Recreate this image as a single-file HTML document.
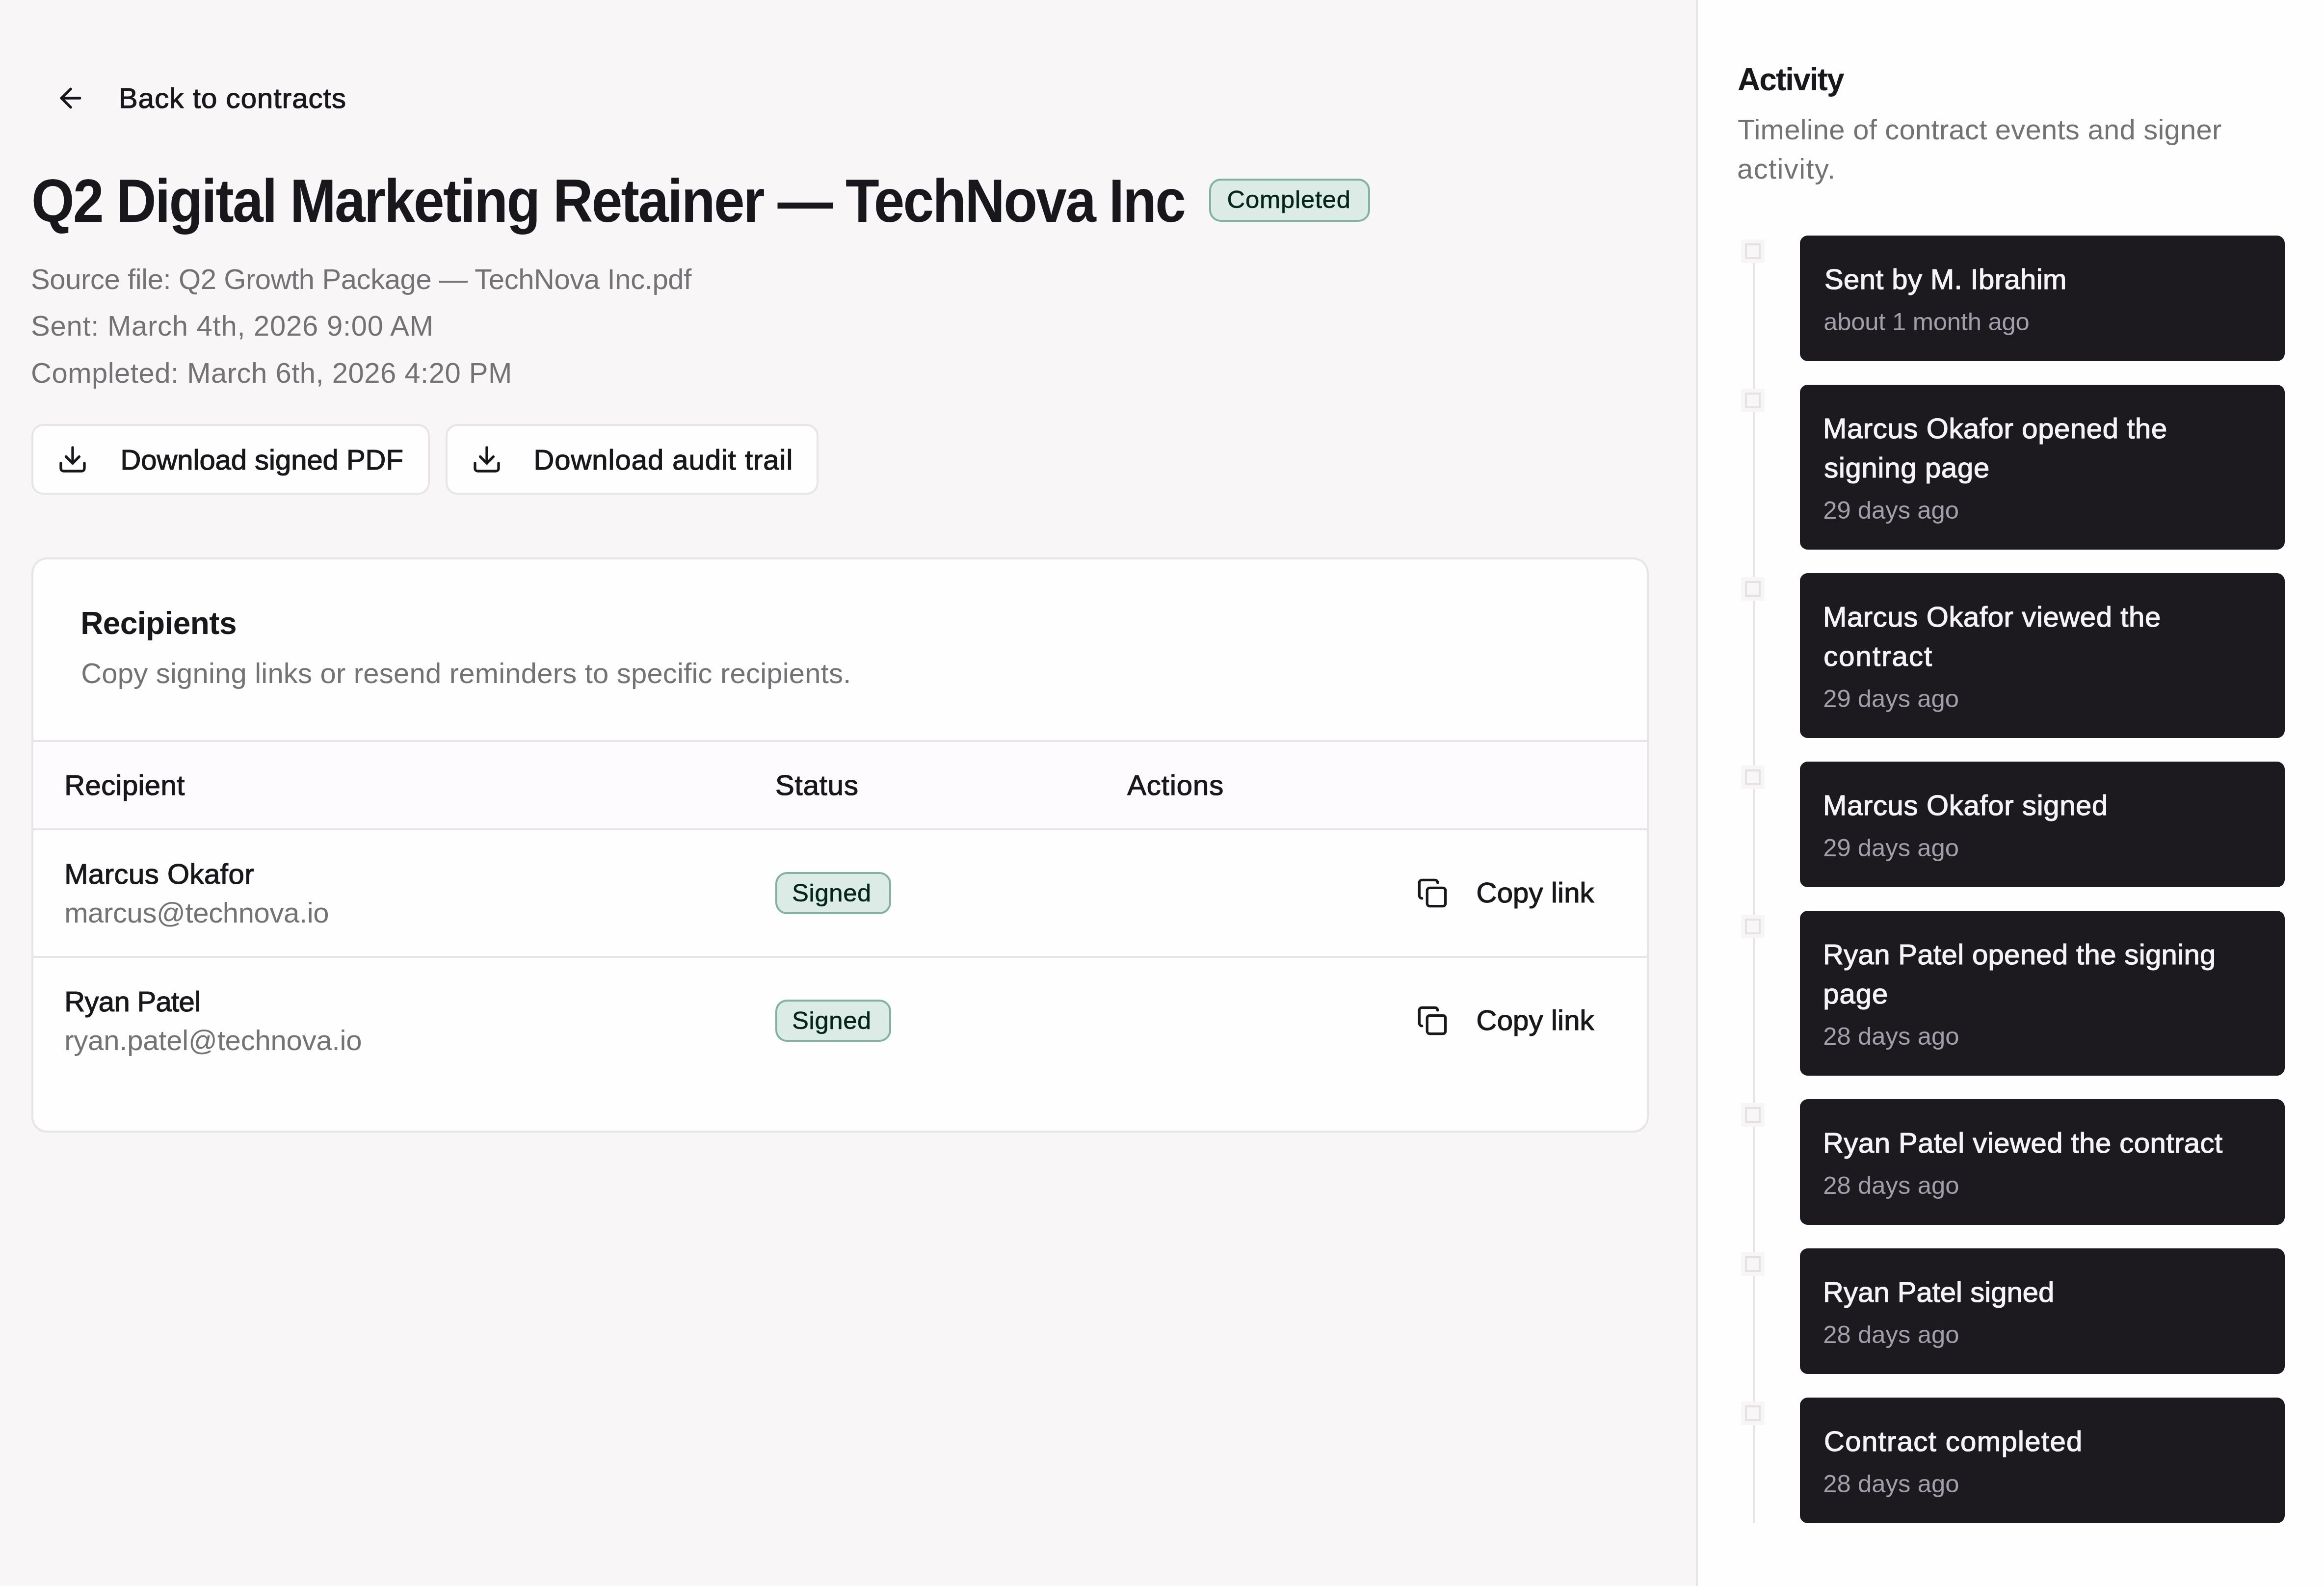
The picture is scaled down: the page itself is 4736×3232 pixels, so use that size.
<!DOCTYPE html><html><head><meta charset="utf-8"><style>
html,body{margin:0;padding:0;}
html{zoom:1;background:#f8f6f7;}
@media (min-width:2368px){html{zoom:2;}}
@media (min-width:3552px){html{zoom:3;}}
@media (min-width:4736px){html{zoom:4;}}
body{width:1184px;height:808px;overflow:hidden;position:relative;background:#f8f6f7;font-family:"Liberation Sans",sans-serif;color:#18171b;}
.a{position:absolute;white-space:nowrap;}
.t14{font-size:14.5px;line-height:20px;}
.t12{font-size:12.7px;line-height:16px;}
.t16{font-size:16px;line-height:24px;font-weight:700;}
.muted{color:#757276;}
.med{-webkit-text-stroke:0.3px currentColor;}
svg.ic{position:absolute;width:16px;height:16px;fill:none;stroke:currentColor;stroke-width:2;stroke-linecap:round;stroke-linejoin:round;}
#aside{position:absolute;left:864px;top:0;width:320px;height:808px;background:#fefefe;border-left:1px solid #e7e5e5;box-sizing:border-box;}
.btn{position:absolute;top:216px;height:36px;box-sizing:border-box;border:1px solid #e7e5e5;border-radius:6px;background:#fefefe;}
.badge .med{-webkit-text-stroke:0.15px currentColor;}
.badge{position:absolute;box-sizing:border-box;border:1px solid #80b3a3;background:#dcebe6;border-radius:6px;color:#03261b;}
#card{position:absolute;left:16px;top:284px;width:824px;height:293px;box-sizing:border-box;border:1px solid #e7e5e5;border-radius:8px;background:#fefefe;overflow:hidden;}
.hline{position:absolute;left:0;width:100%;height:1px;background:#e7e5e5;}
.ev{position:absolute;left:52px;width:247px;background:#1c1a1e;border-radius:4px;}
.ev .tt{position:absolute;font-size:14.5px;line-height:20px;color:#f5f3f6;white-space:nowrap;}
.ev .st{position:absolute;font-size:12.7px;line-height:16px;color:#a29eaa;white-space:nowrap;}
.mk{position:absolute;left:22px;width:12px;height:12px;background:#f7f5f6;}
.mk i{position:absolute;left:2px;top:2px;width:8px;height:8px;box-sizing:border-box;border:1px solid #e4e2e3;background:#f8f6f7;}
</style></head><body>
<svg class="ic" style="left:28px;top:42px;" viewBox="0 0 24 24"><path d="m12 19-7-7 7-7"/><path d="M19 12H5"/></svg>
<div id="back" class="a t14 med" style="left:60.500px;letter-spacing:0.283px;top:40.1px;">Back to contracts</div>
<div id="title" class="a" style="left:15.950px;top:84.15px;font-size:31px;line-height:36px;font-weight:700;letter-spacing:-0.75px;transform:scaleX(0.9083);transform-origin:0 0;">Q2 Digital Marketing Retainer — TechNova Inc</div>
<div class="badge" style="left:616px;top:91px;width:82px;height:22px;"><span id="badge" class="a t12 med" style="left:8.150px;letter-spacing:0.181px;top:1.8px;">Completed</span></div>
<div id="src" class="a t14 muted" style="left:15.750px;letter-spacing:-0.102px;top:132.2px;">Source file: Q2 Growth Package — TechNova Inc.pdf</div>
<div id="sent" class="a t14 muted" style="left:15.750px;letter-spacing:0.183px;top:156.1px;">Sent: March 4th, 2026 9:00 AM</div>
<div id="comp" class="a t14 muted" style="left:15.750px;letter-spacing:0.124px;top:180.0px;">Completed: March 6th, 2026 4:20 PM</div>
<div class="btn" style="left:16px;width:203px;"><svg class="ic" style="left:12px;top:9px;" viewBox="0 0 24 24"><path d="M12 15V3"/><path d="M21 15v4a2 2 0 0 1-2 2H5a2 2 0 0 1-2-2v-4"/><path d="m7 10 5 5 5-5"/></svg><span id="dl1" class="a t14 med" style="left:44.350px;letter-spacing:-0.009px;top:7.3px;">Download signed PDF</span></div>
<div class="btn" style="left:227px;width:190px;"><svg class="ic" style="left:12px;top:9px;" viewBox="0 0 24 24"><path d="M12 15V3"/><path d="M21 15v4a2 2 0 0 1-2 2H5a2 2 0 0 1-2-2v-4"/><path d="m7 10 5 5 5-5"/></svg><span id="dl2" class="a t14 med" style="left:43.850px;letter-spacing:0.244px;top:7.3px;">Download audit trail</span></div>
<div id="card">
<div id="rec" class="a t16" style="left:24.050px;letter-spacing:-0.146px;top:20.55px;">Recipients</div>
<div id="desc" class="a t14 muted" style="left:24.300px;letter-spacing:0.050px;top:48px;">Copy signing links or resend reminders to specific recipients.</div>
<div class="hline" style="top:92px;"></div><div style="position:absolute;left:0;top:93px;width:100%;height:44px;background:#fdfbfd;"></div><div class="hline" style="top:137px;"></div>
<div id="rech" class="a t14 med" style="left:15.800px;letter-spacing:0.104px;top:105.1px;">Recipient</div>
<div id="status" class="a t14 med" style="left:378.000px;letter-spacing:0.229px;top:105.1px;">Status</div>
<div id="actions" class="a t14 med" style="left:557.300px;letter-spacing:0.241px;top:105.1px;">Actions</div>
<div id="mo" class="a t14 med" style="left:15.800px;letter-spacing:0.125px;top:150.3px;">Marcus Okafor</div>
<div id="moe" class="a t14 muted" style="left:15.800px;letter-spacing:-0.095px;top:170px;">marcus@technova.io</div>
<div class="badge" style="left:378px;top:159.3px;width:59px;height:21.5px;"><span id="signed0" class="a t12 med" style="left:7.500px;letter-spacing:0.160px;top:1.8px;">Signed</span></div>
<svg class="ic" style="left:704.7px;top:162.1px;" viewBox="0 0 24 24"><rect width="14" height="14" x="8" y="8" rx="2" ry="2"/><path d="M4 16c-1.1 0-2-.9-2-2V4c0-1.1.9-2 2-2h10c1.1 0 2 .9 2 2"/></svg>
<div id="copy0" class="a t14 med" style="left:735.150px;letter-spacing:0.046px;top:159.8px;">Copy link</div>
<div class="hline" style="top:202px;"></div>
<div id="rp" class="a t14 med" style="left:15.800px;letter-spacing:-0.162px;top:215.3px;">Ryan Patel</div>
<div id="rpe" class="a t14 muted" style="left:15.800px;letter-spacing:-0.048px;top:235px;">ryan.patel@technova.io</div>
<div class="badge" style="left:378px;top:224.3px;width:59px;height:21.5px;"><span id="signed1" class="a t12 med" style="left:7.500px;letter-spacing:0.160px;top:1.8px;">Signed</span></div>
<svg class="ic" style="left:704.7px;top:227.1px;" viewBox="0 0 24 24"><rect width="14" height="14" x="8" y="8" rx="2" ry="2"/><path d="M4 16c-1.1 0-2-.9-2-2V4c0-1.1.9-2 2-2h10c1.1 0 2 .9 2 2"/></svg>
<div id="copy1" class="a t14 med" style="left:735.150px;letter-spacing:0.046px;top:224.8px;">Copy link</div>
</div>
<div id="aside">
<div id="act" class="a t16" style="left:20.250px;letter-spacing:-0.486px;top:28.5px;">Activity</div>
<div id="tl1" class="a t14 muted" style="left:20.250px;letter-spacing:0.057px;top:56px;">Timeline of contract events and signer</div>
<div id="tl2" class="a t14 muted" style="left:20.000px;letter-spacing:0.345px;top:75.9px;">activity.</div>
<div style="position:absolute;left:28px;top:128px;width:1px;height:648px;background:#e7e5e5;"></div>
<div class="mk" style="top:122px;"><i></i></div>
<div class="ev" style="top:120px;height:64px;"><div id="c1_0" class="tt med" style="left:12.500px;letter-spacing:0.097px;top:12.15px;">Sent by M. Ibrahim</div><div id="s1_0" class="st" style="left:12.050px;letter-spacing:-0.063px;top:36.05px;">about 1 month ago</div></div>
<div class="mk" style="top:198px;"><i></i></div>
<div class="ev" style="top:196px;height:84px;"><div id="c2a_1" class="tt med" style="left:11.750px;letter-spacing:0.158px;top:12.15px;">Marcus Okafor opened the</div><div id="c2b_1" class="tt med" style="left:12.300px;letter-spacing:0.185px;top:32.15px;">signing page</div><div id="s29_1" class="st" style="left:11.800px;letter-spacing:-0.002px;top:56.05px;">29 days ago</div></div>
<div class="mk" style="top:294px;"><i></i></div>
<div class="ev" style="top:292px;height:84px;"><div id="c3a_2" class="tt med" style="left:11.750px;letter-spacing:0.158px;top:12.15px;">Marcus Okafor viewed the</div><div id="c3b_2" class="tt med" style="left:12.050px;letter-spacing:0.521px;top:32.15px;">contract</div><div id="s29_2" class="st" style="left:11.800px;letter-spacing:-0.002px;top:56.05px;">29 days ago</div></div>
<div class="mk" style="top:390px;"><i></i></div>
<div class="ev" style="top:388px;height:64px;"><div id="c4_3" class="tt med" style="left:11.750px;letter-spacing:0.170px;top:12.15px;">Marcus Okafor signed</div><div id="s29_3" class="st" style="left:11.800px;letter-spacing:-0.002px;top:36.05px;">29 days ago</div></div>
<div class="mk" style="top:466px;"><i></i></div>
<div class="ev" style="top:464px;height:84px;"><div id="c5a_4" class="tt med" style="left:11.750px;letter-spacing:0.092px;top:12.15px;">Ryan Patel opened the signing</div><div id="c5b_4" class="tt med" style="left:11.800px;letter-spacing:0.252px;top:32.15px;">page</div><div id="s28_4" class="st" style="left:11.800px;letter-spacing:0.013px;top:56.05px;">28 days ago</div></div>
<div class="mk" style="top:562px;"><i></i></div>
<div class="ev" style="top:560px;height:64px;"><div id="c6_5" class="tt med" style="left:11.750px;letter-spacing:0.126px;top:12.15px;">Ryan Patel viewed the contract</div><div id="s28_5" class="st" style="left:11.800px;letter-spacing:0.013px;top:36.05px;">28 days ago</div></div>
<div class="mk" style="top:638px;"><i></i></div>
<div class="ev" style="top:636px;height:64px;"><div id="c7_6" class="tt med" style="left:11.750px;letter-spacing:0.008px;top:12.15px;">Ryan Patel signed</div><div id="s28_6" class="st" style="left:11.800px;letter-spacing:0.013px;top:36.05px;">28 days ago</div></div>
<div class="mk" style="top:714px;"><i></i></div>
<div class="ev" style="top:712px;height:64px;"><div id="c8_7" class="tt med" style="left:12.250px;letter-spacing:0.344px;top:12.15px;">Contract completed</div><div id="s28_7" class="st" style="left:11.800px;letter-spacing:0.013px;top:36.05px;">28 days ago</div></div>
</div></body></html>
